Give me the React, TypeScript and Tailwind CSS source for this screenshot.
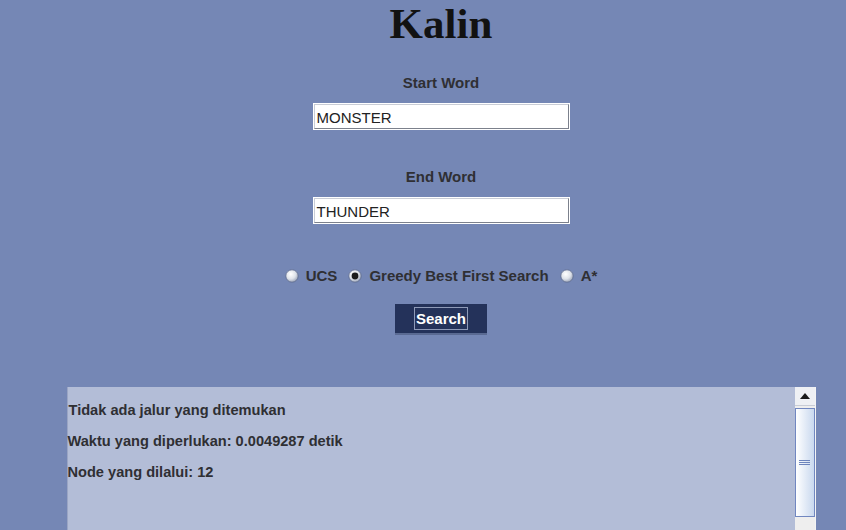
import React from "react";

const Radio = ({ checked }: { checked?: boolean }) => (
  <svg width="14" height="14" viewBox="0 0 14 14" className="shrink-0">
    <defs>
      <radialGradient id={checked ? "rg1" : "rg0"} cx="40%" cy="35%" r="70%">
        <stop offset="0%" stopColor="#ffffff" />
        <stop offset="55%" stopColor="#dfe3ea" />
        <stop offset="100%" stopColor="#949db2" />
      </radialGradient>
    </defs>
    <circle cx="7" cy="7" r="6.2" fill={`url(#${checked ? "rg1" : "rg0"})`} stroke="#5d6b8e" strokeWidth="0.8" />
    {checked && <circle cx="7" cy="7" r="3.4" fill="#1c1c1c" />}
  </svg>
);

const Field = ({ value }: { value: string }) => (
  <div className="w-[255px] h-[25px] bg-white border border-t-[#c9cdd6] border-l-[#c9cdd6] border-b-[#7c818c] border-r-[#7c818c] outline outline-1 outline-white flex items-center px-[2px] pt-[3px] text-[15px] text-[#222]">
    {value}
  </div>
);

const Label = ({ children }: { children: React.ReactNode }) => (
  <div className="text-[15px] leading-[18px] font-bold text-[#2f2f33]">{children}</div>
);

export default function App() {
  return (
    <div
      className="w-[846px] h-[530px] overflow-hidden bg-[#7587b5] pl-[36px] flex flex-col items-center"
      style={{ fontFamily: '"Liberation Sans", Arial, sans-serif' }}
    >
      <h1
        className="pt-[3px] text-[43px] leading-[42px] font-bold text-[#121212]"
        style={{ fontFamily: '"Liberation Serif", "Times New Roman", serif' }}
      >
        Kalin
      </h1>

      <div className="mt-[29px]">
        <Label>Start Word</Label>
      </div>
      <div className="mt-[12px]">
        <Field value="MONSTER" />
      </div>

      <div className="mt-[39px]">
        <Label>End Word</Label>
      </div>
      <div className="mt-[12px]">
        <Field value="THUNDER" />
      </div>

      <div className="mt-[44px] h-[18px] flex items-center text-[15px] font-bold text-[#2f2f33]">
        <Radio />
        <span className="ml-[7px]">UCS</span>
        <span className="ml-[11px]">
          <Radio checked />
        </span>
        <span className="ml-[7px]">Greedy Best First Search</span>
        <span className="ml-[11px]">
          <Radio />
        </span>
        <span className="ml-[7px]">A*</span>
      </div>

      <button className="mt-[19px] w-[92px] h-[31px] bg-[#24325a] border-b-2 border-[#5a6a92] flex items-center justify-center">
        <span className="border border-[#8e9ab8] px-[1px] h-[23px] leading-[21px] text-[15px] font-bold text-white">
          Search
        </span>
      </button>

      <div className="mt-[52px] w-[749px] flex-1 bg-[#b3bdd7] border-l border-[#9aa5c4] flex">
        <div className="flex-1 pt-[8px] text-[14.6px] leading-[31px] font-bold text-[#2f2f33] flex flex-col">
          <div className="pl-[1px]">Tidak ada jalur yang ditemukan</div>
          <div>Waktu yang diperlukan: 0.0049287 detik</div>
          <div>Node yang dilalui: 12</div>
        </div>
        <div className="w-[21px] flex flex-col bg-[#eeeeee] border-r border-[#f4f4f4]">
          <div className="h-[19px] bg-[#eef0f4] border-b border-[#c8ccd6] flex items-center justify-center">
            <svg width="10" height="6" viewBox="0 0 10 6">
              <path d="M5 0 L10 6 L0 6 Z" fill="#1a1a1a" />
            </svg>
          </div>
          <div className="mt-[2px] h-[109px] border border-[#7187c0] bg-gradient-to-r from-[#ffffff] to-[#c9d8ee] flex items-center justify-center">
            <div className="flex flex-col gap-[1px]">
              <div className="w-[11px] h-[1px] bg-[#6d84bd]" />
              <div className="w-[11px] h-[1px] bg-[#6d84bd]" />
              <div className="w-[11px] h-[1px] bg-[#6d84bd]" />
            </div>
          </div>
        </div>
      </div>
    </div>
  );
}
